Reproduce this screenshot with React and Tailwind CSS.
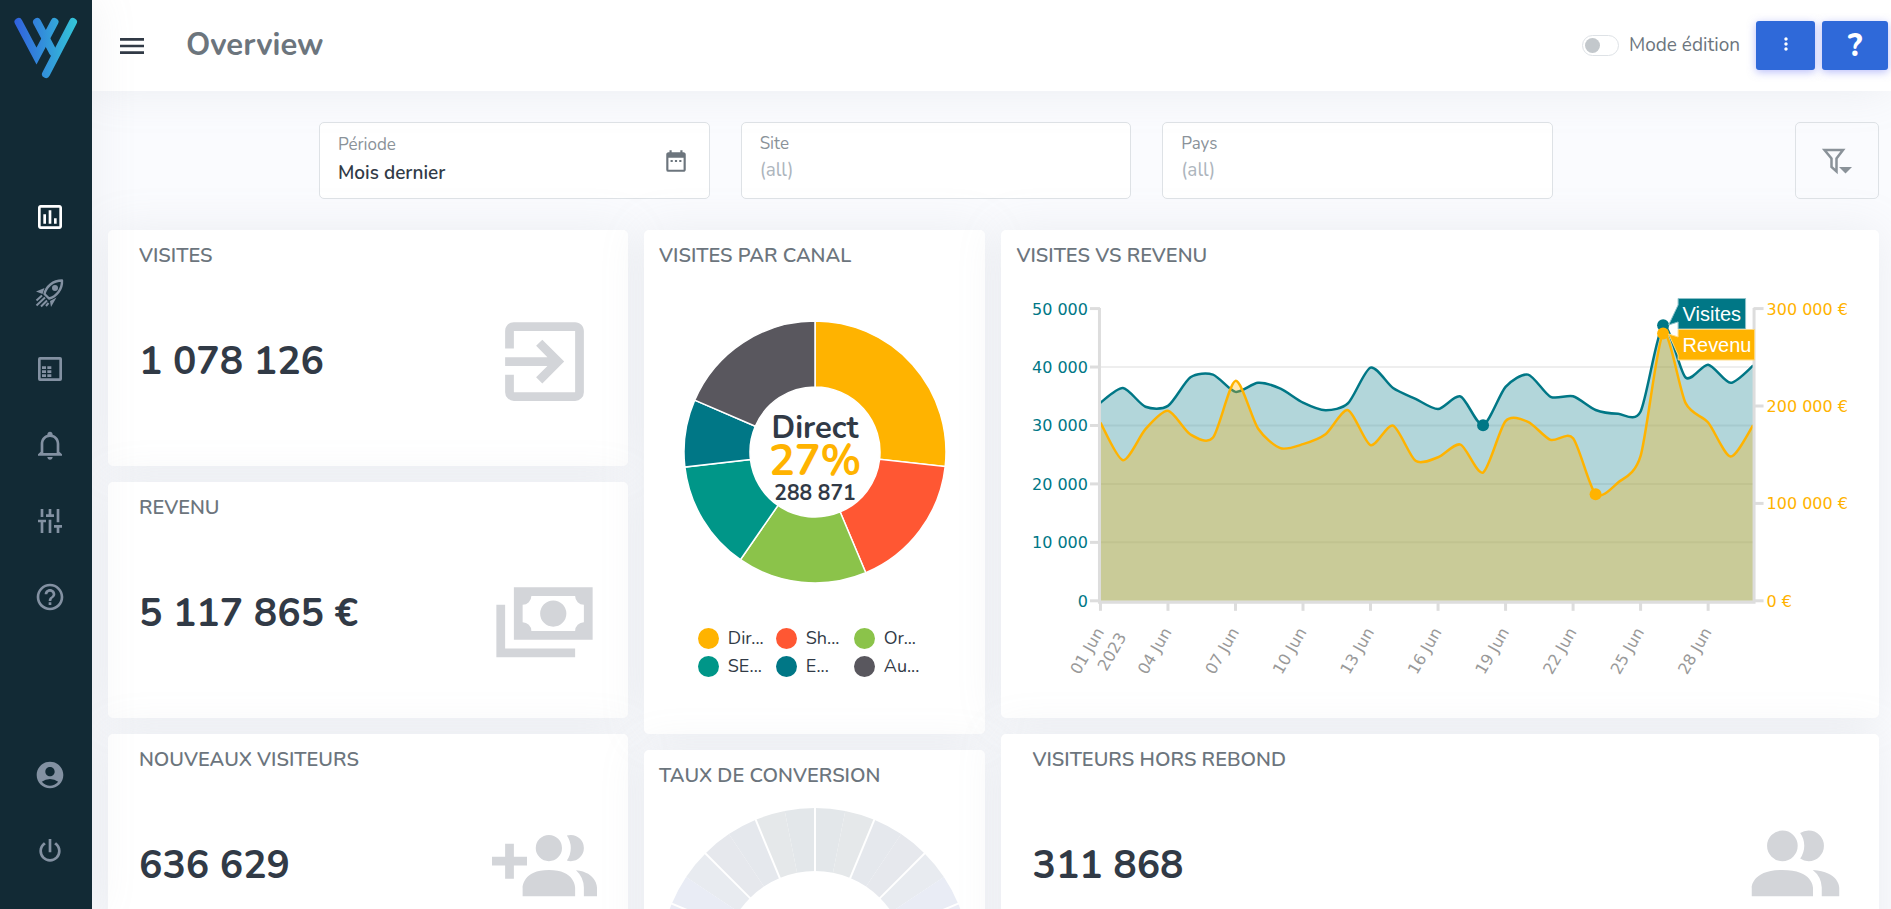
import React from 'react';
import { MdAccountCircle, MdDateRange, MdHelpOutline, MdMoreVert } from 'react-icons/md';

const MdiIcon = ({ d, className }) => (
  <svg viewBox="0 0 24 24" className={className} fill="currentColor" aria-hidden="true">
    <path fillRule="evenodd" d={d} />
  </svg>
);

const icons = {
  menu: 'M3,6H21V8H3V6M3,11H21V13H3V11M3,16H21V18H3V16Z',
  chart: 'M9 17H7V10H9V17M13 17H11V7H13V17M17 17H15V13H17V17M19 19H5V5H19V19M19 3H5C3.9 3 3 3.9 3 5V19C3 20.1 3.9 21 5 21H19C20.1 21 21 20.1 21 19V5C21 3.9 20.1 3 19 3Z',
  table: 'M4.5 3H19.5A1.5 1.5 0 0 1 21 4.5V19.5A1.5 1.5 0 0 1 19.5 21H4.5A1.5 1.5 0 0 1 3 19.5V4.5A1.5 1.5 0 0 1 4.5 3M5 5V19H19V5H5M6 10H9V12H6V10M10 10H13V12H10V10M6 13H9V15H6V13M10 13H13V15H10V13M6 16H9V18H6V16M10 16H13V18H10V16Z',
  bell: 'M10 21H14C14 22.1 13.1 23 12 23S10 22.1 10 21M21 19V20H3V19L5 17V11C5 7.9 7 5.2 10 4.3V4C10 2.9 10.9 2 12 2S14 2.9 14 4V4.3C17 5.2 19 7.9 19 11V17L21 19M17 11C17 8.2 14.8 6 12 6S7 8.2 7 11V18H17V11Z',
  tune: 'M5 3H7V9H5V3M3 11H9V13H7V21H5V13H3V11M11 3H13V7H15V9H9V7H11V3M11 11H13V21H11V11M17 3H19V13H17V3M15 15H21V17H19V21H17V17H15V15Z',
  power: 'M16.56,5.44L15.11,6.89C16.84,7.94 18,9.83 18,12A6,6 0 0,1 12,18A6,6 0 0,1 6,12C6,9.83 7.16,7.94 8.88,6.88L7.44,5.44C5.36,6.88 4,9.28 4,12A8,8 0 0,0 12,20A8,8 0 0,0 20,12C20,9.28 18.64,6.88 16.56,5.44M13,3H11V13H13V3Z',
  enter: 'M19,3H5C3.89,3 3,3.89 3,5V9H5V5H19V19H5V15H3V19A2,2 0 0,0 5,21H19A2,2 0 0,0 21,19V5C21,3.89 20.1,3 19,3M10.08,15.58L11.5,17L16.5,12L11.5,7L10.08,8.41L12.67,11H3V13H12.67L10.08,15.58Z',
  cash: 'M5,6H23V18H5V6M14,9A3,3 0 0,1 17,12A3,3 0 0,1 14,15A3,3 0 0,1 11,12A3,3 0 0,1 14,9M9,8A2,2 0 0,1 7,10V14A2,2 0 0,1 9,16H19A2,2 0 0,1 21,14V10A2,2 0 0,1 19,8H9M1,10H3V20H19V22H1V10Z',
  peoplePlus: 'M19 17V19H7V17S7 13 13 13 19 17 19 17M16 8A3 3 0 1 0 13 11A3 3 0 0 0 16 8M19.2 13.06A5.6 5.6 0 0 1 21 17V19H24V17S24 13.55 19.2 13.06M18 5A2.91 2.91 0 0 0 17.11 5.14A5 5 0 0 1 17.11 10.86A2.91 2.91 0 0 0 18 11A3 3 0 0 0 18 5M8 10H5V7H3V10H0V12H3V15H5V12H8Z',
  people: 'M16 17V19H2V17S2 13 9 13 16 17 16 17M12.5 7.5A3.5 3.5 0 1 0 9 11A3.5 3.5 0 0 0 12.5 7.5M15.94 13A5.32 5.32 0 0 1 18 17V19H22V17S22 13.37 15.94 13M15 4A3.39 3.39 0 0 0 13.07 4.59A5 5 0 0 1 13.07 10.41A3.39 3.39 0 0 0 15 11A3.5 3.5 0 0 0 15 4Z',
};

const Rocket = () => (
  <svg viewBox="0 0 32 32" className="size-8" fill="none" stroke="currentColor" aria-hidden="true">
    <path strokeWidth="2.4" strokeLinejoin="round" d="M10.5 17C12 9.5 19 3.5 28 3.5C28.5 12 22.5 19.5 15 21.5Z" />
    <circle cx="21" cy="11" r="3" fill="currentColor" stroke="none" />
    <path fill="currentColor" stroke="none" d="M2 14.5L10.5 11L8.5 17ZM17 30L16 24L22.5 20.5Z" />
    <path strokeWidth="2" d="M2.5 23.5L8 18.5M2.5 28.5L11 20.5M7 29.5L13 23.5M12 29L14.5 26" />
  </svg>
);

const Logo = () => (
  <svg viewBox="0 0 64 62" className="h-[62px] w-16" fill="none" aria-hidden="true">
    <defs>
      <linearGradient id="logo" gradientUnits="userSpaceOnUse" x1="2" y1="6" x2="62" y2="6">
        <stop offset="0" stopColor="#3163dd" />
        <stop offset="1" stopColor="#34c5d8" />
      </linearGradient>
    </defs>
    <g stroke="url(#logo)" strokeWidth="8" strokeLinecap="round">
      <path strokeLinejoin="miter" d="M4.5 5L22.5 39L40.5 5" />
      <path d="M23 5L39 35" />
      <path d="M59 5L32 57" />
    </g>
  </svg>
);

const FilterMenu = () => (
  <svg viewBox="0 0 32 28" className="h-7 w-8" fill="none" aria-hidden="true">
    <path stroke="#8a9299" strokeWidth="2.5" d="M3.5 3H22L15.5 11.5V24.5L10.5 20V11.5Z" />
    <path fill="#8a9299" d="M18 20H31L24.5 26.5Z" />
  </svg>
);

const NavItem = ({ label, active, children }) => (
  <a
    href="#"
    aria-label={label}
    className={`flex h-[76px] items-center justify-center pl-2 ${active ? 'text-white' : 'text-[#8391a2]'}`}
  >
    {children}
  </a>
);

const Sidebar = () => (
  <nav className="z-10 flex w-[92px] shrink-0 flex-col bg-[#122a35] shadow-[0_0_45px_0_rgba(154,161,171,0.15)]">
    <div className="flex h-[179px] justify-center pt-[17px]">
      <Logo />
    </div>
    <NavItem label="Tableaux de bord" active><MdiIcon d={icons.chart} className="size-8" /></NavItem>
    <NavItem label="Campagnes"><Rocket /></NavItem>
    <NavItem label="Rapports"><MdiIcon d={icons.table} className="size-8" /></NavItem>
    <NavItem label="Alertes"><MdiIcon d={icons.bell} className="size-8" /></NavItem>
    <NavItem label="Réglages"><MdiIcon d={icons.tune} className="size-8" /></NavItem>
    <NavItem label="Aide"><MdHelpOutline className="size-8" /></NavItem>
    <div className="mt-auto pb-5">
      <NavItem label="Compte"><MdAccountCircle className="size-8" /></NavItem>
      <NavItem label="Déconnexion"><MdiIcon d={icons.power} className="size-8" /></NavItem>
    </div>
  </nav>
);

const Header = () => (
  <header className="z-[5] flex h-[91px] shrink-0 items-center bg-white pr-[3px] pl-6 shadow-[0_0_45px_0_rgba(154,161,171,0.15)]">
    <button aria-label="Menu" className="text-[#313a46]"><MdiIcon d={icons.menu} className="size-8" /></button>
    <h1 className="ml-[38px] pb-0.5 text-[31px] leading-10 font-bold text-[#6c757d]">Overview</h1>
    <label className="ml-auto flex items-center gap-2.5 text-[19px] text-[#6c757d]">
      <input
        type="checkbox"
        className="relative h-[21px] w-[37px] appearance-none rounded-full border border-[#dee2e6] bg-white before:absolute before:top-[2px] before:left-[2px] before:size-[15px] before:rounded-full before:bg-[#c3c8cc]"
      />
      Mode édition
    </label>
    <button aria-label="Plus d'options" className="ml-4 flex h-[49px] w-[59px] items-center justify-center rounded-[3px] bg-[#2f69d9] pb-1 text-white shadow-[0_2px_8px_0_rgba(114,124,245,0.5)]">
      <MdMoreVert className="size-5" />
    </button>
    <button className="ml-[7px] h-[49px] w-[66px] rounded-[3px] bg-[#2f69d9] pt-0.5 text-[31px] leading-none font-extrabold text-white shadow-[0_2px_8px_0_rgba(114,124,245,0.5)]">?</button>
  </header>
);

const Field = ({ id, label, value, placeholder, icon }) => (
  <div className="flex h-[77px] items-center rounded-[5px] border border-[#dee2e6] bg-white pr-5 pl-[18px]">
    <div className={`min-w-0 flex-1 ${value ? 'pb-1' : 'pb-1.5'}`}>
      <label htmlFor={id} className={`block text-[17px] text-[#8a9299] ${value ? 'leading-7' : 'leading-6'}`}>{label}</label>
      <input
        id={id}
        defaultValue={value}
        placeholder={placeholder}
        className="block w-full text-[19px] leading-7 font-semibold text-[#313a46] outline-none placeholder:font-normal placeholder:text-[#adb5bd]"
      />
    </div>
    {icon}
  </div>
);

const Card = ({ title, className = '', inset = 'px-[15px]', children }) => (
  <section className={`flex flex-col rounded-[5px] bg-white pt-[13px] shadow-[0_0_45px_0_rgba(154,161,171,0.15)] ${className}`}>
    <h2 className={`text-[20px] leading-[26px] font-semibold text-[#6c757d] uppercase ${inset}`}>{title}</h2>
    {children}
  </section>
);

const Kpi = ({ title, value, icon }) => (
  <Card title={title} className="h-[236px]" inset="px-[31px]">
    <div className="flex flex-1 items-center justify-between px-[31px] pb-3">
      <span className="text-[39px] leading-none font-bold text-[#313a46]">{value}</span>
      <MdiIcon d={icon} className="size-[105px] text-[#d3d5d9]" />
    </div>
  </Card>
);

const channels = [
  { label: 'Dir...', color: '#ffb300', end: 96.4 },
  { label: 'Sh...', color: '#ff5733', end: 157.2 },
  { label: 'Or...', color: '#8bc34a', end: 214.7 },
  { label: 'SE...', color: '#009688', end: 263.4 },
  { label: 'E...', color: '#007786', end: 293.3 },
  { label: 'Au...', color: '#59575e', end: 360 },
];

// ring sector, angles in degrees clockwise from the top
const sector = (from, to, r, R) => {
  const pt = (deg, radius) => {
    const a = (deg * Math.PI) / 180;
    return `${radius * Math.sin(a)} ${-radius * Math.cos(a)}`;
  };
  return `M${pt(from, R)}A${R} ${R} 0 0 1 ${pt(to, R)}L${pt(to, r)}A${r} ${r} 0 0 0 ${pt(from, r)}Z`;
};

const ChannelDonut = () => (
  <>
    <svg viewBox="-132 -132 264 264" className="mx-auto mt-[51px] size-[264px]">
      {channels.map((c, i) => (
        <path
          key={c.label}
          d={sector(i ? channels[i - 1].end : 0, c.end, 65, 131)}
          fill={c.color}
          stroke="#fff"
          strokeWidth="1.5"
        />
      ))}
      <g textAnchor="middle" fill="#313a46">
        <text y="-14" fontSize="31" fontWeight="700">Direct</text>
        <text y="23" fontSize="43" fontWeight="700" fill="#ffb300">27%</text>
        <text y="48" fontSize="21" fontWeight="700">288 871</text>
      </g>
    </svg>
    <ul className="mx-auto mt-10 grid grid-cols-[78px_78px_78px]">
      {channels.map((c) => (
        <li key={c.label} className="flex h-7 items-center gap-[9px] text-[18px] text-[#313a46]">
          <span className="size-[21px] rounded-full" style={{ backgroundColor: c.color }} />
          {c.label}
        </li>
      ))}
    </ul>
  </>
);

const gaugeColors = [
  '#e3e7ea', '#e5e8ea', '#e5e8ed', '#e6e8ed', '#e8ebf0', '#e9ecf5', '#eaecf6', '#ecf0f8',
  '#e9ebf0', '#e6e9ee', '#e5e8ed', '#e3e7ea', '#e3e7ea', '#e3e7ea', '#e3e7ea', '#e3e7ea',
];

const Gauge = () => (
  <svg viewBox="-155 -155 310 310" className="mx-auto mt-[19px] size-[310px] shrink-0">
    {gaugeColors.map((color, i) => (
      <g key={i} fill={color}>
        <path d={sector(i * 11.25, (i + 1) * 11.25, 92, 155)} />
        <path d={sector(-(i + 1) * 11.25, -i * 11.25, 92, 155)} />
      </g>
    ))}
    {[...Array(16)].map((_, i) => (
      <path key={i} d="M0 -90V-157" stroke="#fff" strokeWidth="2" transform={`rotate(${i * 22.5})`} />
    ))}
  </svg>
);

const visites = [
  33900, 36400, 33200, 33350, 38250, 38700, 35750, 37300, 36300, 33900, 32600, 33800, 39900, 36400, 34550,
  32800, 34950, 30050, 36600, 38700, 34900, 35000, 32650, 32000, 32400, 47150, 38200, 40400, 37300, 40250,
];
const revenu = [
  183000, 144400, 176200, 195000, 170700, 167600, 225800, 176900, 156700, 160800, 171000, 195700, 159800, 179900, 143700,
  147400, 160400, 131700, 184400, 183700, 165200, 166900, 109500, 121400, 148800, 274400, 202900, 183000, 148100, 180300,
];

const BASE = 321;
const px = (day) => 99.5 + day * 22.52;
const py = (value, max) => BASE - (value / max) * 292.4;

const curve = (values, max) => {
  const p = values.map((v, i) => [px(i), py(v, max)]);
  const k = 0.13;
  let d = `M${p[0]}`;
  for (let i = 0; i < p.length - 1; i++) {
    const a = p[i - 1] || p[i];
    const b = p[i];
    const c = p[i + 1];
    const e = p[i + 2] || c;
    d += `C${b[0] + (c[0] - a[0]) * k} ${b[1] + (c[1] - a[1]) * k} ${c[0] - (e[0] - b[0]) * k} ${c[1] - (e[1] - b[1]) * k} ${c[0]} ${c[1]}`;
  }
  return d;
};

const Series = ({ values, max, color, bullets }) => {
  const line = curve(values, max);
  return (
    <g>
      <path d={`${line}V${BASE}H${px(0)}Z`} fill={color} fillOpacity="0.3" />
      <path d={line} fill="none" stroke={color} strokeWidth="2.5" />
      {bullets.map((i) => <circle key={i} cx={px(i)} cy={py(values[i], max)} r="6" fill={color} />)}
    </g>
  );
};

const days = ['01 Jun', '04 Jun', '07 Jun', '10 Jun', '13 Jun', '16 Jun', '19 Jun', '22 Jun', '25 Jun', '28 Jun'];

const VisitsChart = () => (
  <svg viewBox="0 0 878 420" className="mt-[11px] w-full font-['DejaVu_Sans',sans-serif] text-[16px]">
    <g stroke="#eee" strokeWidth="2">
      {[10, 20, 30, 40].map((k) => <path key={k} d={`M100 ${py(k, 50)}H753`} />)}
    </g>
    <Series values={visites} max={50000} color="#007786" bullets={[17, 25]} />
    <Series values={revenu} max={300000} color="#ffb300" bullets={[22, 25]} />

    {/* axes */}
    <g stroke="#ddd" strokeWidth="3" fill="none">
      <path d="M98.5 28V322.5H753.5V28" />
      {[0, 10, 20, 30, 40, 50].map((k) => <path key={k} d={`M89 ${py(k, 50)}H99`} />)}
      {[0, 1, 2, 3].map((k) => <path key={k} d={`M753 ${py(k, 3)}H763`} />)}
      {days.map((d, i) => <path key={d} d={`M${px(i * 3)} 323V331`} />)}
    </g>
    <g fill="#007786" textAnchor="end">
      {[0, 10, 20, 30, 40, 50].map((k) => (
        <text key={k} x="87" y={py(k, 50) + 6}>{k ? `${k} 000` : '0'}</text>
      ))}
    </g>
    <g fill="#ffb300">
      {[0, 1, 2, 3].map((k) => (
        <text key={k} x="766" y={py(k, 3) + 6}>{k ? `${k}00 000 €` : '0 €'}</text>
      ))}
    </g>
    <g fill="#999" textAnchor="end">
      {days.map((d, i) => (
        <text key={d} transform={`translate(${px(i * 3) + 4} 352) rotate(-60)`}>{d}</text>
      ))}
      <text transform="translate(126 357) rotate(-60)">2023</text>
    </g>

    {/* series flags */}
    <g className="font-['Liberation_Sans',sans-serif] text-[20px]" fill="#fff">
      <path d="M677.5 18.5H745V49H677.5V42L668 45L677.5 25Z" fill="#007786" stroke="#8fc3ca" />
      <text x="682" y="41">Visites</text>
      <path d="M677.5 49.5H754V80H677.5V75L668 54L677.5 57Z" fill="#ffb300" stroke="#ffd980" />
      <text x="682" y="72">Revenu</text>
    </g>
  </svg>
);

const App = () => (
  <div className="flex h-screen overflow-hidden bg-[#fafbfe] font-['Nunito','Lato',sans-serif]">
    <Sidebar />
    <div className="flex min-w-0 flex-1 flex-col">
      <Header />
      <main className="min-h-0 flex-1 overflow-y-auto pr-1 pl-2 [scrollbar-width:none]">
        <form className="flex pt-[31px] pr-2">
          <div className="grid flex-1 grid-cols-3 gap-[31px] pr-[242px] pl-[219px]">
            <Field id="periode" label="Période" value="Mois dernier" icon={<MdDateRange className="size-[26px] text-[#6c757d]" />} />
            <Field id="site" label="Site" placeholder="(all)" />
            <Field id="pays" label="Pays" placeholder="(all)" />
          </div>
          <button type="button" aria-label="Filtres" className="flex h-[77px] w-[84px] items-center justify-center rounded-[5px] border border-[#dee2e6]">
            <FilterMenu />
          </button>
        </form>

        <div className="mt-[31px] flex items-start">
          <div className="flex w-[30%] flex-col gap-4 px-2">
            <Kpi title="Visites" value="1 078 126" icon={icons.enter} />
            <Kpi title="Revenu" value="5 117 865 €" icon={icons.cash} />
            <Kpi title="Nouveaux visiteurs" value="636 629" icon={icons.peoplePlus} />
          </div>
          <div className="flex w-[20%] flex-col gap-4 px-2">
            <Card title="Visites par canal" className="h-[504px]">
              <ChannelDonut />
            </Card>
            <Card title="Taux de conversion" className="h-[504px]">
              <Gauge />
            </Card>
          </div>
          <div className="flex w-1/2 flex-col gap-4 px-2">
            <Card title="Visites vs revenu" className="h-[488px]">
              <VisitsChart />
            </Card>
            <Kpi title="Visiteurs hors rebond" value="311 868" icon={icons.people} />
          </div>
        </div>
      </main>
    </div>
  </div>
);

export default App;
